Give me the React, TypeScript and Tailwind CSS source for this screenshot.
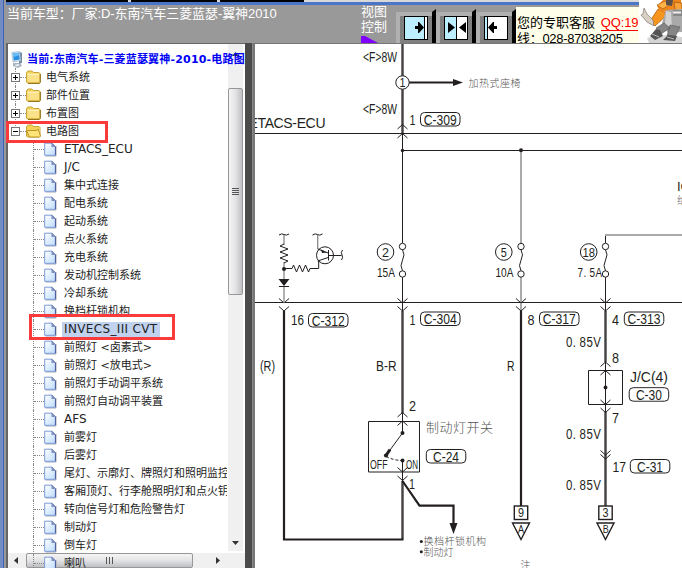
import React from "react";

const SANS = "font-['DejaVu_Sans','Noto_Sans_CJK_SC',sans-serif]";
const ARIAL = "font-['Liberation_Sans','Noto_Sans_CJK_SC',sans-serif]";

const FOLDERS = ["电气系统", "部件位置", "布置图", "电路图"];

const PAGES = [
  "ETACS_ECU",
  "J/C",
  "集中式连接",
  "配电系统",
  "起动系统",
  "点火系统",
  "充电系统",
  "发动机控制系统",
  "冷却系统",
  "换档杆锁机构",
  "INVECS_III CVT",
  "前照灯 <卤素式>",
  "前照灯 <放电式>",
  "前照灯手动调平系统",
  "前照灯自动调平装置",
  "AFS",
  "前雾灯",
  "后雾灯",
  "尾灯、示廓灯、牌照灯和照明监控",
  "客厢顶灯、行李舱照明灯和点火钥",
  "转向信号灯和危险警告灯",
  "制动灯",
  "倒车灯",
  "喇叭",
];

const SELECTED = "INVECS_III CVT";

function pageClass(name: string) {
  if (name === SELECTED) {
    return "ml-[5px] h-[15px] whitespace-nowrap bg-[#c1d2ee] px-[2px] text-[12px] leading-[15px] tracking-[0.35px]";
  }
  if (/^[A-Z_/]+$/.test(name)) {
    return "ml-[7px] whitespace-nowrap text-[12px]";
  }
  return "ml-[7px] whitespace-nowrap pt-px";
}

function ComputerIcon() {
  return (
    <svg width="13" height="17" viewBox="0 0 13 17" className="shrink-0">
      <path d="M2 12h7l2 3-4 2-5-2z" fill="#aeb9c4" />
      <path d="M8 1l3 .8v10L8 13z" fill="#738aa0" />
      <path d="M.8 1.5L8.5.5l1.3 9.2L2 11z" fill="#d4e5f3" stroke="#8ea9bf" strokeWidth=".6" />
      <path d="M1.8 2.6l6-.8 1 6.8-6 .9z" fill="#2a8fe0" />
      <path d="M1.8 2.6l6-.8.3 2.4-5.9 2z" fill="#68bdf5" />
      <path d="M2 14l5-1.5 3 1.5-4 2z" fill="#e6ebef" stroke="#8797a4" strokeWidth=".5" />
    </svg>
  );
}

function FolderIcon({ open }: { open: boolean }) {
  return (
    <svg width="16" height="14" viewBox="0 0 16 14" className="shrink-0">
      <path d="M.5 2.5L2 1h4l1.500 1.500H13l1 1V12l-1 1H1.500l-1-1z" fill="#f3d258" stroke="#c9a437" />
      {open ? (
        <>
          <path d="M12.5 4.5h1v7l-1 1z" fill="#fff2b0" />
          <path d="M.7 6.5H11l1.2-1.6 2.3 7.3-.8.8H3.300z" fill="#ffe47a" stroke="#b58f1c" strokeWidth=".9" />
        </>
      ) : (
        <>
          <path d="M1.500 4h11.500v7.800H1.500z" fill="#fbe28a" />
          <path d="M1.500 4.200h11.500" stroke="#fff6cc" />
          <path d="M14.400 4v8.500l-1 1H2" fill="none" stroke="#8b6a10" strokeWidth=".9" />
        </>
      )}
    </svg>
  );
}

function PageIcon() {
  return (
    <svg width="13" height="15" viewBox="0 0 13 15" className="shrink-0">
      <defs>
        <linearGradient id="sheet" x1="0" y1="0" x2="1" y2="1">
          <stop offset="0" stopColor="#fff" />
          <stop offset="1" stopColor="#bcdcfb" />
        </linearGradient>
      </defs>
      <path d="M12 4v10H1.500" fill="none" stroke="#a5a8b5" />
      <path d="M.7 1.200h7l3.600 3.500v8.600H.7z" fill="url(#sheet)" stroke="#7a9ad6" />
      <path d="M7.500 1l4 4v8.200" fill="none" stroke="#53619f" />
      <path d="M7.500 1v4h4z" fill="#8190c4" />
    </svg>
  );
}

function Toggle({ open }: { open: boolean }) {
  return (
    <svg width="9" height="9" viewBox="0 0 9 9" className="relative shrink-0 bg-white">
      <rect x=".5" y=".5" width="8" height="8" fill="#fff" stroke="#777" />
      <path d={open ? "M2 4.500h5" : "M2 4.500h5M4.500 2v5"} stroke="#000" />
    </svg>
  );
}

function Tree() {
  return (
    <div className={`relative flex h-full flex-col overflow-hidden pt-[6px] text-[11px] leading-[18px] text-[#222] ${SANS}`}>
      <div className="flex h-[18px] shrink-0 items-center pl-[3px]">
        <ComputerIcon />
        <span className="ml-[3px] whitespace-nowrap pt-px font-bold tracking-[0.18px] text-[#0000f5]">
          当前:东南汽车-三菱蓝瑟翼神-2010-电路图
        </span>
      </div>
      {FOLDERS.map((name, i) => (
        <div key={name} className="relative flex h-[18px] shrink-0 items-center pl-[3px]">
          <i
            className={
              i === 3
                ? "absolute left-[7px] top-0 h-[6px] border-l border-dotted border-[#888]"
                : "absolute left-[7px] top-0 h-[18px] border-l border-dotted border-[#888]"
            }
          />
          <Toggle open={i === 3} />
          <i className="w-[6px] border-t border-dotted border-[#888]" />
          <FolderIcon open={i === 3} />
          <span className="ml-[4px] pt-px">{name}</span>
        </div>
      ))}
      {PAGES.map((name) => (
        <div key={name} className="flex h-[18px] w-[219px] shrink-0 items-center overflow-hidden pl-[25px]">
          <i className="h-[18px] shrink-0 border-l border-dotted border-[#888]" />
          <i className="w-[10px] shrink-0 border-t border-dotted border-[#888]" />
          <PageIcon />
          <span className={pageClass(name)}>{name}</span>
        </div>
      ))}
    </div>
  );
}

function Scrollbars() {
  return (
    <>
      <div className="absolute bottom-[17px] right-[2px] top-0 flex w-[15px] flex-col items-center bg-[#f0f0f0]">
        <svg width="7" height="4" className="mt-[8px] shrink-0">
          <path d="M0 4l3.500-4L7 4z" fill="#333" />
        </svg>
        <div className="mt-[32px] flex h-[207px] w-[15px] flex-col items-center justify-center gap-[1px] rounded-[2px] border border-[#979797] bg-linear-to-r from-[#f5f5f5] via-[#e3e3e5] to-[#bfc0c4]">
          <i className="h-px w-[7px] bg-[#555]" />
          <i className="h-px w-[7px] bg-[#555]" />
          <i className="h-px w-[7px] bg-[#555]" />
          <i className="h-px w-[7px] bg-[#555]" />
        </div>
        <svg width="7" height="4" className="mb-[6px] mt-auto shrink-0">
          <path d="M0 0h7L3.500 4z" fill="#333" />
        </svg>
      </div>
      <div className="absolute bottom-0 left-0 right-0 flex h-[15px] items-center bg-[#f0f0f0]">
        <svg width="4" height="7" className="ml-[6px] shrink-0">
          <path d="M4 0v7L0 3.500z" fill="#333" />
        </svg>
        <div className="ml-[8px] flex h-[15px] w-[167px] items-center justify-center gap-[2px] rounded-[2px] border border-[#979797] bg-linear-to-b from-[#f5f5f5] via-[#e3e3e5] to-[#bfc0c4]">
          <i className="h-[7px] w-px bg-[#555]" />
          <i className="h-[7px] w-px bg-[#555]" />
          <i className="h-[7px] w-px bg-[#555]" />
        </div>
        <svg width="4" height="7" className="ml-[23px] shrink-0">
          <path d="M0 0v7l4-3.500z" fill="#333" />
        </svg>
      </div>
    </>
  );
}

function ViewButton({ kind }: { kind: "right" | "both" | "left" }) {
  return (
    <svg width="40" height="34" viewBox="0 0 40 34" className="shrink-0">
      <path d="M0 3h36v31H0z" fill="#b0b0b0" />
      <path d="M4 7h32v27H4z" fill="#808080" />
      <path d="M36 3l4-3v34h-4z" fill="#000" />
      <rect x="8.500" y="7.500" width="23" height="23" fill="#fff" stroke="#000" />
      {kind === "right" && (
        <>
          <path d="M9 8h19v22H9z" fill="#bdeeff" />
          <path d="M28.500 8v22" stroke="#000" />
          <path d="M19 17h3v-4h1l5 5.500-5 5.500h-1v-4h-3z" fill="#000" />
        </>
      )}
      {kind === "both" && (
        <>
          <path d="M9 8h11v22H9z" fill="#bdeeff" />
          <path d="M20.500 8v22" stroke="#000" />
          <path d="M12 13l7 5.500-7 5.500zM30 13l-7 5.500 7 5.500z" fill="#000" />
        </>
      )}
      {kind === "left" && (
        <>
          <path d="M9 8h2v22H9z" fill="#bdeeff" />
          <path d="M11.500 8v22" stroke="#000" />
          <path d="M21 17h-3v-4h-1l-5 5.500 5 5.500h1v-4h3z" fill="#000" />
        </>
      )}
    </svg>
  );
}

function Robot() {
  return (
    <svg width="43" height="43" viewBox="0 0 43 43" className="block bg-white">
      <path d="M8 38q15-5 35-1v6H10z" fill="#d4d4d4" />
      <path d="M19 9l-8 12 5 5 13-12z" fill="#f7941d" stroke="#a85708" strokeWidth=".7" />
      <path d="M14 20l-6-6-3-6-1 6-2 1 6 7 7 4z" fill="#d8cfc5" stroke="#81776d" strokeWidth=".7" />
      <path d="M24 0h18v10l-7 3-14-2-3-5z" fill="#ef861b" />
      <path d="M18 5l8-4 4 4-6 4z" fill="#ffb347" stroke="#9b5312" strokeWidth=".6" />
      <path d="M35 2l8 1v8l-7-1z" fill="#f6a13a" stroke="#8f4708" strokeWidth=".6" />
      <path d="M27 0h7l-1 6-6-1z" fill="#57504b" />
      <path d="M27 10l16-1v23l-14 1-6-10z" fill="#a9a9a9" />
      <path d="M27 11l5 1 1 16-7-3z" fill="#d2d2d2" />
      <path d="M34 10h9v6h-9z" fill="#888" />
      <path d="M34 12.500h8" stroke="#eee" strokeWidth="2" />
      <path d="M25 23l-8 5 5 6 9-6zM31 25l-3 11 7 3 6-12z" fill="#858585" stroke="#555" strokeWidth=".6" />
      <path d="M17 29l-6 7 5 4 8-4-3-6zM29 35l-5 5 12 1 2-5z" fill="#555" />
      <path d="M13 34l7 3M28 37l7 2" stroke="#bbb" />
    </svg>
  );
}

type LabelProps = { x: number; y: number; w: number; size?: number; children: string };

function Label({ x, y, w, size = 15.500, children }: LabelProps) {
  return (
    <text x={x} y={y} textLength={w} lengthAdjust="spacingAndGlyphs" fontSize={size} fill="#231f20">
      {children}
    </text>
  );
}

/* Narrow lettering in which every character takes a cell of the same width. */
function Cells({ x, y, w, size = 15.500, children }: LabelProps) {
  const squeeze = 0.74;
  const cell = w / children.length / squeeze;
  return (
    <text
      transform={`translate(${x} ${y}) scale(${squeeze} 1)`}
      x={children.split("").map((_, i) => i * cell).join(" ")}
      y="0"
      fontSize={size}
      fill="#231f20"
    >
      {children}
    </text>
  );
}

function Note({ x, y, w, size = 10, children }: LabelProps) {
  return (
    <text x={x} y={y} textLength={w} fontSize={size} fill="#555" className="font-['Noto_Sans_CJK_SC',sans-serif] font-light">
      {children}
    </text>
  );
}

function Pill({ x, y, text }: { x: number; y: number; text: string }) {
  const inner = text.length > 4 ? 33 : 26;
  return (
    <>
      <rect x={x} y={y} width="39.500" height="13.500" rx="4" fill="none" />
      <rect x={x + (39.5 - inner) / 2 - 0.5} y={y + 1} width={inner + 1} height="11.500" fill="#fff" stroke="none" />
      <g stroke="none">
        <Label x={x + (39.5 - inner) / 2} y={y + 12} w={inner} size={15}>{text}</Label>
      </g>
    </>
  );
}

function Fuse({ x }: { x: number }) {
  return (
    <>
      <circle cx={x} cy="246.500" r="3.200" fill="#fff" />
      <circle cx={x} cy="274" r="3.200" fill="#fff" />
      <path d={`M${x} 249.700q3 5 0 10.500t0 10.600`} fill="none" />
    </>
  );
}

function Up({ x, y }: { x: number; y: number }) {
  return <path d={`M${x - 5} ${y + 4.5}L${x} ${y}l5 4.500`} fill="none" />;
}

function Down({ x, y }: { x: number; y: number }) {
  return <path d={`M${x - 5} ${y - 4.5}L${x} ${y}l5 -4.500`} fill="none" />;
}

function Diagram() {
  return (
    <svg viewBox="255 44 427 524" width="427" height="524" className={`block bg-white ${ARIAL}`}>
      <g stroke="#231f20" strokeWidth="1" fill="none">
        <path d="M255 133.500h427M402.500 150.500H682M255 302.500h427" />
        <path d="M402.500 133v110M402.500 277v34M605.500 235v8M605.500 277v34M605.500 362v50" />
        <path d="M521 151v92M521 277v34M605 235h77" stroke="#aaa" strokeWidth="2" />
        <path d="M402.500 44v89M402.500 311v102M605.500 311v51M605.500 412v94M402.500 481v58" stroke="#443f40" strokeWidth="2.400" />
        <path d="M284 311v228.500h119.500M521 311v195" strokeWidth="2.200" />
        <path d="M409 82.500h46" strokeWidth="2" />
        <path d="M453 79l10 3.500-10 3.500z" fill="#231f20" stroke="none" />
        <circle cx="402.500" cy="82.500" r="6.700" fill="#fff" />

        <Up x={402.5} y={124.5} />
        <Up x={402.5} y={133.500} />
        {[284, 402.5, 521, 605.5].map((x) => (
          <React.Fragment key={x}>
            <Down x={x} y={303} />
            <Down x={x} y={311} />
          </React.Fragment>
        ))}
        <circle cx="402.500" cy="150.500" r="1.700" fill="#231f20" stroke="none" />
        <circle cx="521" cy="150.300" r="2" fill="#231f20" stroke="none" />

        <Fuse x={402.5} />
        <Fuse x={521} />
        <Fuse x={605.5} />
        <circle cx="385.500" cy="252" r="8.300" />
        <circle cx="503.800" cy="252" r="8.300" />
        <circle cx="588.700" cy="252" r="8.300" />

        <path d="M279 235q3-2 5-.5t5-.5M312.500 235q3-2 5-.5t5-.5" />
        <path d="M284 235v10M284 262v17M284 286v17M317.700 235v14" stroke="#888" strokeWidth="1.300" />
        <path d="M284 244l-4 2 8 3-8 3 8 3-8 3 8 3-4 2M284 268.500h8l1.500-3.500 3 7 3-7 3 7 3-7 3 7 1.500-3.500h8.700V261" />
        <circle cx="284" cy="269" r="2" fill="#231f20" stroke="none" />
        <path d="M278.500 279h11l-5.500 7z" fill="#231f20" stroke="none" />
        <path d="M279 286.500h10" />
        <circle cx="325" cy="255.300" r="8.500" />
        <path d="M317.700 249l10.500 4M317.700 261l10.500-3.500M328.500 250v10.500M328.500 255.500h13M342.500 250q-2 2.500-.5 5t-.5 5" />
        <path d="M321 249.500l6 3-5 .5z" fill="#231f20" stroke="none" />

        <path d="M368.500 421.500h51v50.500h-51z" />
        <path d="M402.500 412v21L386 455.500M402.500 460v21" />
        <path d="M386 456.500q8 4 16.500 4" strokeDasharray="3 2" />
        <path d="M386 455.500l4-6" strokeWidth="3" />
        <circle cx="402.500" cy="433" r="2" fill="#231f20" stroke="none" />
        <circle cx="386" cy="455.500" r="2.100" fill="#231f20" stroke="none" />
        <circle cx="402.500" cy="460.500" r="2" fill="#231f20" stroke="none" />
        <Up x={402.5} y={412.500} />
        <Up x={402.5} y={421} />
        <Down x={402.5} y={472} />
        <Down x={402.5} y={480.500} />
        <path d="M402.500 481l17 24.700h34V524" strokeWidth="2.200" />
        <path d="M449.500 523h8l-4 11z" fill="#231f20" stroke="none" />

        <path d="M588.500 370.500h34v34h-34z" />
        <circle cx="605.500" cy="387.500" r="1.900" fill="#231f20" stroke="none" />
        <Up x={605.5} y={362} />
        <Up x={605.5} y={370.500} />
        <Down x={605.5} y={404.500} />
        <Down x={605.5} y={412.500} />
        <Down x={605.5} y={455} />
        <Down x={605.5} y={459} />
        {[521, 605.5].map((x) => (
          <React.Fragment key={x}>
            <rect x={x - 6.700} y="506" width="13.400" height="13.500" fill="#fff" strokeWidth="1.400" />
            <path d={`M${x - 8.500} 523h17l-8.500 16.500z`} strokeWidth="1.400" />
          </React.Fragment>
        ))}

        <Pill x={420.500} y={112.500} text="C-309" />
        <Pill x={308.500} y={313.500} text="C-312" />
        <Pill x={420.500} y={312} text="C-304" />
        <Pill x={539.500} y={312} text="C-317" />
        <Pill x={624.300} y={312} text="C-313" />
        <Pill x={426.300} y={449.500} text="C-24" />
        <Pill x={629.200} y={387.700} text="C-30" />
        <Pill x={630.300} y={459.500} text="C-31" />
      </g>

      <text x="248.500" y="128" fontSize="14" textLength="77" fill="#231f20">ETACS-ECU</text>
      <Label x={363} y={62} w={34}>{"<F>8W"}</Label>
      <Label x={363} y={114} w={34}>{"<F>8W"}</Label>
      <Label x={399.5} y={87} w={6} size={12}>1</Label>
      <Label x={409.5} y={125} w={6}>1</Label>
      <Label x={382} y={256.700} w={7} size={13}>2</Label>
      <Label x={500.700} y={256.700} w={6} size={13}>5</Label>
      <Label x={582.500} y={256.700} w={12.500} size={13}>18</Label>
      <Label x={377} y={277} w={18} size={13.500}>15A</Label>
      <Label x={495.500} y={277} w={18} size={13.500}>10A</Label>
      <Cells x={577.500} y={277} w={24} size={13.500}>7.5A</Cells>
      <Label x={291} y={324.500} w={13}>16</Label>
      <Label x={409.5} y={324.500} w={6}>1</Label>
      <Label x={527.500} y={324.500} w={7}>8</Label>
      <Label x={612} y={324.500} w={7}>4</Label>
      <Label x={260} y={371} w={15}>(R)</Label>
      <Label x={376} y={371} w={20.500}>B-R</Label>
      <Label x={507} y={371} w={7.500}>R</Label>
      <Cells x={566} y={347} w={34}>0.85V</Cells>
      <Cells x={566} y={438.500} w={34}>0.85V</Cells>
      <Cells x={566} y={489.500} w={34}>0.85V</Cells>
      <Label x={612} y={363} w={7}>8</Label>
      <Label x={612} y={422.500} w={7}>7</Label>
      <Label x={612.500} y={472} w={13.500}>17</Label>
      <Label x={630} y={381.500} w={38} size={14.500}>J/C(4)</Label>
      <Label x={409} y={410.500} w={7}>2</Label>
      <Label x={409} y={488.500} w={6}>1</Label>
      <Label x={370} y={469} w={17.500} size={13}>OFF</Label>
      <Label x={406} y={469} w={12} size={13}>ON</Label>
      <Label x={518} y={517} w={6} size={12}>9</Label>
      <Label x={602.500} y={517} w={6} size={12}>3</Label>
      <Label x={518} y={532.500} w={6} size={11}>A</Label>
      <Label x={602.800} y={532.500} w={6} size={11}>B</Label>
      <text x="677" y="190.500" fontSize="13" fill="#231f20">IG</text>
      <Note x={677} y={204} w={10}>给</Note>
      <Note x={468.500} y={86.500} w={52}>加热式座椅</Note>
      <Note x={426} y={431.500} w={67} size={13}>制动灯开关</Note>
      <circle cx="421.300" cy="541.500" r="1.500" fill="#231f20" />
      <circle cx="421.300" cy="551.700" r="1.500" fill="#231f20" />
      <Note x={423.500} y={545.300} w={62.500}>换档杆锁机构</Note>
      <Note x={423.500} y={555.700} w={30}>制动灯</Note>
      <Note x={520.500} y={568.500} w={10}>注</Note>
    </svg>
  );
}

export default function App() {
  return (
    <div className={`relative flex h-[568px] w-[682px] overflow-hidden bg-[#999] ${ARIAL}`}>
      <div className="flex w-[6px] shrink-0">
        <i className="w-[3px] bg-[#758bc3]" />
        <i className="w-px bg-[#3b62b7]" />
        <i className="w-[2px] bg-[#999]" />
      </div>
      <div className="flex min-w-0 flex-1 flex-col">
        <div className="flex h-[43px] shrink-0">
          <div className="flex w-[633px] flex-col">
            <div className="flex h-[2px] shrink-0 gap-[3px] bg-[#d8d8d8]">
              <i className="w-[122px] bg-black" />
              <i className="w-[86px] bg-black" />
              <i className="w-[84px] bg-black" />
            </div>
            <div className="h-[3px] shrink-0 bg-[#4b76c8]" />
            <div className="flex h-[38px]">
              <div className="w-[355px] whitespace-nowrap pl-px text-[13px] leading-[17px] tracking-[-0.08px] text-white">
                当前车型：厂家:D-东南汽车三菱蓝瑟-翼神2010
              </div>
              <div className="flex w-[35px] flex-col text-[13px] leading-[15px] text-white">
                <span className="-mt-px">视图</span>
                <span>控制</span>
                <svg width="17" height="7" className="mt-[2px] shrink-0">
                  <path d="M0 0h4l13 7H0z" fill="#8000ff" />
                </svg>
              </div>
              <div className="flex pt-[4px]">
                <ViewButton kind="right" />
                <ViewButton kind="both" />
                <ViewButton kind="left" />
              </div>
              <div className="mt-[2px] flex h-[36px] flex-1 flex-col overflow-hidden whitespace-nowrap bg-[#ffffe9] pl-px pt-[8px] text-[13px] leading-[16px] text-black">
                <div className="shrink-0">
                  您的专职客服 <span className="ml-[2px] border-b border-[#f00] tracking-[-0.1px] text-[#f00]">QQ:19</span>
                </div>
                <div className="shrink-0 tracking-[-0.3px]">线：028-87038205</div>
              </div>
            </div>
          </div>
          <Robot />
        </div>
        <div className="flex min-h-0 flex-1">
          <div className="flex w-[239px] shrink-0 border-l-2 border-t border-[#666] bg-white">
            <div className="relative min-w-0 flex-1">
              <Scrollbars />
              <Tree />
            </div>
          </div>
          <div className="w-[8px] shrink-0 border-r border-[#888] bg-[#4b4b4b]" />
          <div className="w-[429px] shrink-0 border-l-2 border-t border-[#777]">
            <Diagram />
          </div>
        </div>
      </div>
      <div className="absolute left-[6px] top-[121px] h-[22px] w-[102px] border-3 border-[#fb3b3b]" />
      <div className="absolute left-[29px] top-[314px] h-[26px] w-[146px] border-3 border-[#fb3b3b]" />
    </div>
  );
}
